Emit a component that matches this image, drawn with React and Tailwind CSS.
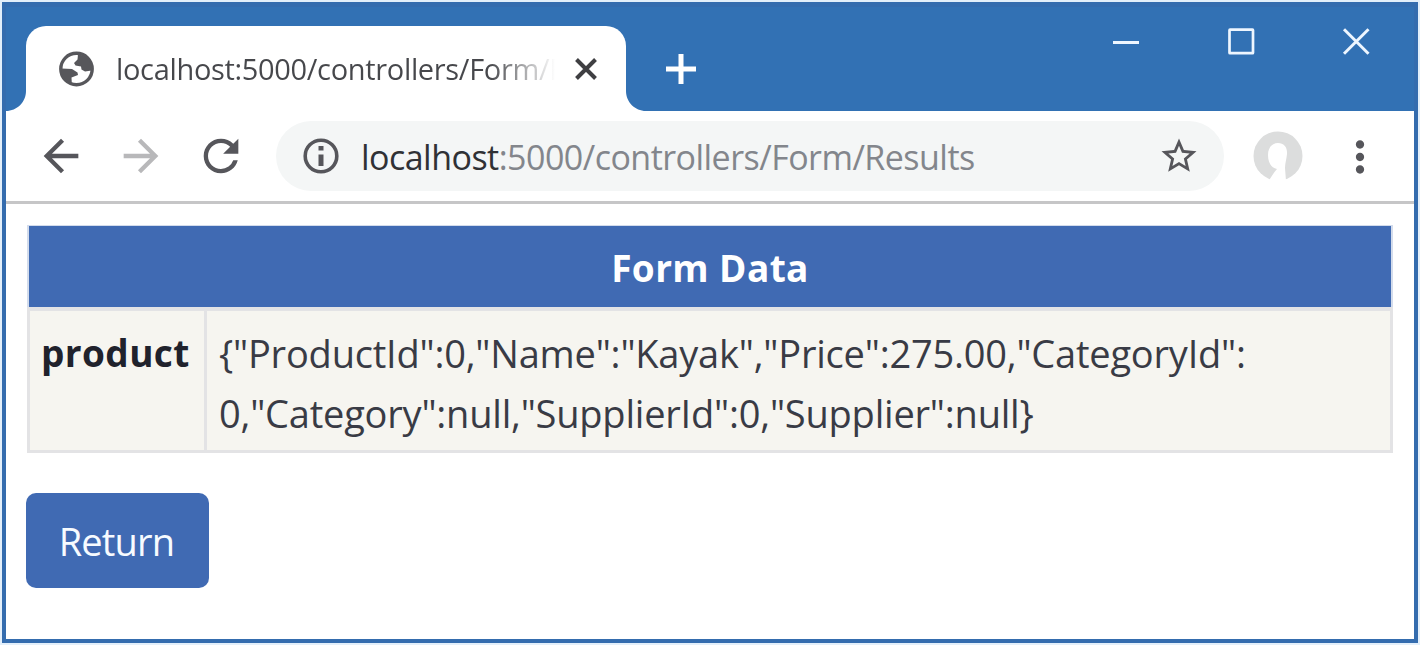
import { MdArrowBack, MdArrowForward, MdRefresh, MdStarBorder, MdMoreVert } from "react-icons/md";

function GlobeIcon() {
  return (
    <svg className="h-[36px] w-[36px] shrink-0" viewBox="0 0 36 36" fill="none">
      <circle cx="17.500" cy="18" r="15.700" stroke="#57575b" strokeWidth="3.400" />
      <path d="M19 3.500C27 4 33 10 32.500 19.500L26 20.500L22.500 18.500L22 15.500L16.500 14.500L15 12L18.500 8.500Z" fill="#57575b" />
      <path d="M2.500 17.500L13 18L18.500 21.500L19 24L12.500 26.500L12.800 32C6.500 30.500 2.500 25 2.500 17.500Z" fill="#57575b" />
    </svg>
  );
}

function Avatar() {
  return (
    <svg className="h-[50px] w-[50px] shrink-0" viewBox="0 0 50 50">
      <circle cx="25" cy="25" r="24.500" fill="#dcdddd" />
      <path d="M25 12C31 12 34.500 16.500 34 23C33.600 28 32 32 32 37L33 50H17L16.500 48.500L21.500 41L24 38C18 37 15 31 15 24C15 17 19 12 25 12Z" fill="#fff" />
    </svg>
  );
}

function WindowControls() {
  return (
    <div className="flex items-center gap-[87px] pr-[44px] pt-[20px]">
      <svg className="h-7 w-7" viewBox="0 0 28 28" stroke="#eef6ff" strokeWidth="3" fill="none">
        <path d="M1 15.500H27" />
      </svg>
      <svg className="h-7 w-7" viewBox="0 0 28 28" stroke="#eef6ff" strokeWidth="2.700" fill="none">
        <rect x="2.500" y="2.700" width="23.500" height="23.500" rx="0.500" />
      </svg>
      <svg className="h-7 w-7" viewBox="0 0 28 28" stroke="#eef6ff" strokeWidth="3" fill="none">
        <path d="M2 2.200L26.500 26.700M26.500 2.200L2 26.700" />
      </svg>
    </div>
  );
}

function TabStrip() {
  return (
    <div className="flex h-[104px] shrink-0 items-start justify-between bg-[#3271b4]">
      <div className="flex items-end pt-[19px]">
        <div className="flex h-[85px] items-end">
          <svg className="h-5 w-5" viewBox="0 0 20 20">
            <path d="M20 0V20H0C11 20 20 11 20 0Z" fill="#fff" />
          </svg>
          <div className="flex h-[85px] w-[600px] items-center rounded-t-[20px] bg-white pl-[33px]">
            <GlobeIcon />
            <div className="ml-[21px] w-[439px] overflow-hidden whitespace-nowrap bg-gradient-to-r from-[#46474b] from-85% to-transparent to-[100%] bg-clip-text text-[29px] leading-[40px] tracking-[-0.33px] text-transparent">
              localhost:5000/controllers/Form/Results
            </div>
            <svg className="ml-[20px] h-[22px] w-[22px]" viewBox="0 0 22 22" stroke="#3f3f42" strokeWidth="4" fill="none">
              <path d="M1.500 1.500L20.500 20.500M20.500 1.500L1.500 20.500" />
            </svg>
          </div>
          <svg className="h-5 w-5" viewBox="0 0 20 20">
            <path d="M0 0V20H20C9 20 0 11 0 0Z" fill="#fff" />
          </svg>
        </div>
        <svg className="mb-[27px] ml-[20px] h-[30px] w-[30px]" viewBox="0 0 30 30" stroke="#fff" strokeWidth="5" fill="none">
          <path d="M0 15H30M15 0V30" />
        </svg>
      </div>
      <WindowControls />
    </div>
  );
}

function Toolbar() {
  return (
    <div className="flex h-[93px] shrink-0 items-center border-b-[3px] border-[#c6c6c7] bg-white pl-[29px] text-[#56565b]">
      <MdArrowBack className="h-[52px] w-[52px]" />
      <MdArrowForward className="ml-[28px] h-[52px] w-[52px] text-[#b8b8ba]" />
      <MdRefresh className="ml-[28px] h-[52px] w-[52px]" />
      <div className="ml-[29px] flex h-[70px] w-[948px] items-center rounded-full bg-[#f4f6f6] pl-[24px] pr-[24px]">
        <svg className="h-[42px] w-[42px]" viewBox="0 0 42 42" fill="none">
          <circle cx="21" cy="21" r="15.800" stroke="currentColor" strokeWidth="3.600" />
          <path d="M21 19.500V31M21 11V15.500" stroke="currentColor" strokeWidth="5" />
        </svg>
        <div className="ml-[19px] mt-[2px] flex-1 whitespace-nowrap text-[34px] leading-[44px] tracking-[-0.53px] text-[#83868c]">
          <span className="text-[#303135]">localhost</span>:5000/controllers/Form/Results
        </div>
        <MdStarBorder className="h-[42px] w-[42px]" />
      </div>
      <div className="ml-[29px]">
        <Avatar />
      </div>
      <MdMoreVert className="ml-[32px] mt-[2px] h-[50px] w-[50px]" />
    </div>
  );
}

function FormData() {
  return (
    <div className="w-[1366px] text-[38px] leading-[60px]">
      <div className="border-x-2 border-t border-[#d3dcec]">
        <div className="h-[81px] bg-[#406ab3] pt-[12px] text-center text-[37px] font-bold tracking-[0.4px] text-white">
          Form Data
        </div>
      </div>
      <div className="flex h-[146px] border-[3px] border-t-4 border-[#e3e3e5] bg-[#f6f5f0]">
        <div className="w-[177px] border-r-[3px] border-[#e3e3e5] pl-[11px] pt-[12px] text-[37px] font-bold tracking-[0.4px] text-[#20222c]">
          product
        </div>
        <div className="flex-1 whitespace-nowrap pl-3 pt-[12px] tracking-[-0.21px] text-[#393b45]">
          {'{"ProductId":0,"Name":"Kayak","Price":275.00,"CategoryId":'}
          <br />
          {'0,"Category":null,"SupplierId":0,"Supplier":null}'}
        </div>
      </div>
    </div>
  );
}

export default function App() {
  return (
    <div className="h-[645px] w-[1420px] overflow-hidden bg-[#e3effa] px-[2px] pb-[2px] pt-[2px] font-['Open_Sans','Noto_Sans',sans-serif]">
      <div className="flex h-[641px] flex-col border-[4px] border-t-[5px] border-[#346cae] bg-white">
        <TabStrip />
        <Toolbar />
        <main className="flex flex-col items-start pl-[21px] pt-[21px]">
          <FormData />
          <button className="-ml-px mt-[40px] h-[95px] w-[183px] rounded-[10px] bg-[#406ab3] pr-[2px] text-[38px] leading-[60px] tracking-[-0.8px] text-[#f7fbff]">
            Return
          </button>
        </main>
      </div>
    </div>
  );
}
